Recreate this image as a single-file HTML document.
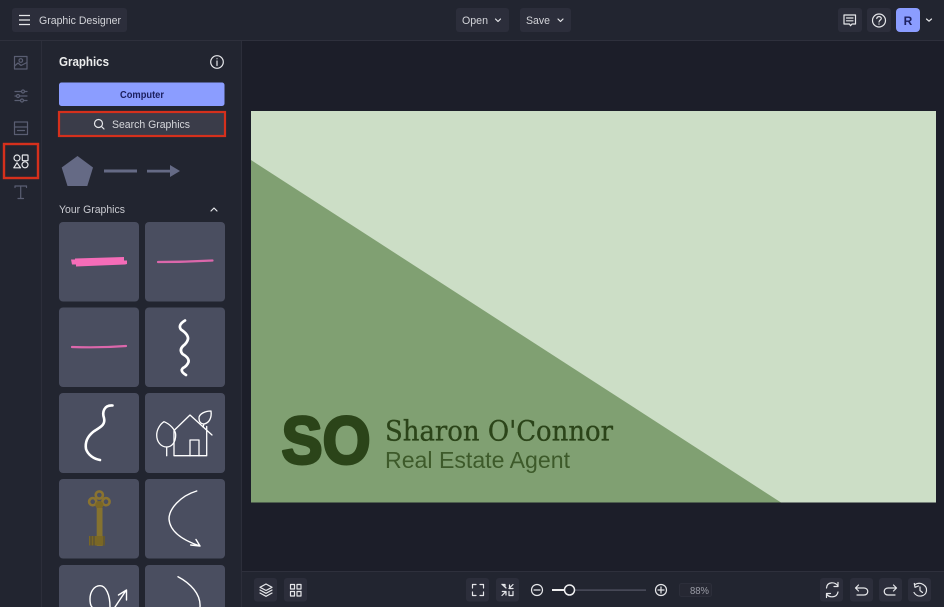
<!DOCTYPE html>
<html><head><meta charset="utf-8"><style>
html,body{margin:0;padding:0;width:944px;height:607px;overflow:hidden;background:#1c1e29}
svg{display:block;font-family:"Liberation Sans",sans-serif}
.i{fill:none;stroke:#e6e7ea;stroke-width:1.2;stroke-linecap:round;stroke-linejoin:round}
.d{fill:none;stroke:#5a5e72;stroke-width:1.2;stroke-linecap:round;stroke-linejoin:round}
.w{fill:none;stroke:#fff;stroke-linecap:round;stroke-linejoin:round}
.b{fill:#2c2e3b}
.p{fill:none;stroke:#f56cb8;stroke-linecap:round}
</style></head><body>
<svg width="944" height="607" viewBox="0 0 944 607" xmlns="http://www.w3.org/2000/svg">
<!-- panels -->
<rect width="944" height="607" fill="#1c1e29"/>
<rect width="944" height="40" fill="#222530"/>
<rect y="40" width="944" height="1" fill="#2e303c"/>
<rect y="41" width="241" height="566" fill="#222530"/>
<rect x="41" y="41" width="1" height="566" fill="#2c2e3a"/>
<rect x="241" y="41" width="1" height="566" fill="#2c2e3a"/>
<rect x="242" y="572" width="702" height="35" fill="#222530"/>
<rect x="242" y="571" width="702" height="1" fill="#2e303c"/>

<!-- top left -->
<rect x="12" y="8" width="115" height="24" rx="3" class="b"/>
<path d="M19 15.500H30M19 20H30M19 24.500H30" stroke="#e6e7ea" stroke-width="1.300" fill="none"/>
<text x="39" y="24" font-size="11" fill="#d3d4d9" textLength="82" lengthAdjust="spacingAndGlyphs">Graphic Designer</text>

<!-- top center -->
<rect x="456" y="8" width="53" height="24" rx="3" class="b"/>
<text x="462" y="24" font-size="11" fill="#d3d4d9" textLength="26" lengthAdjust="spacingAndGlyphs">Open</text>
<path d="M495.500 19L498 21.500L500.500 19" class="i"/>
<rect x="520" y="8" width="51" height="24" rx="3" class="b"/>
<text x="526" y="24" font-size="11" fill="#d3d4d9" textLength="24" lengthAdjust="spacingAndGlyphs">Save</text>
<path d="M558 19L560.500 21.500L563 19" class="i"/>

<!-- top right -->
<rect x="838" y="8" width="24" height="24" rx="3" class="b"/>
<path d="M844 15H855.500V24H852L850.500 25.700L849.500 24H844Z M846.500 18H853M846.500 20.800H853" class="i"/>
<rect x="867" y="8" width="24" height="24" rx="3" class="b"/>
<circle cx="879" cy="20.500" r="6.500" class="i"/>
<path d="M876.800 18.500C877 16 881.300 16 881.300 18.500C881.300 20 879 20 879 22M879 24V24.100" class="i"/>
<rect x="896" y="8" width="24" height="24" rx="4" fill="#8b9dff"/>
<text x="908" y="25" font-size="12" font-weight="700" fill="#1c2060" text-anchor="middle">R</text>
<path d="M926.500 19L929 21.200L931.500 19" class="i"/>

<!-- left rail -->
<g class="d">
<rect x="14.500" y="56.500" width="12.500" height="12.500"/>
<circle cx="20.800" cy="60.500" r="1.800"/>
<path d="M14.500 66L18 63L21 65.500L27 62.500"/>
<path d="M15 91.500H27M15 96H27M15 100.500H27"/>
<circle cx="23" cy="91.500" r="1.500" fill="#222530"/><circle cx="18" cy="96" r="1.500" fill="#222530"/><circle cx="22" cy="100.500" r="1.500" fill="#222530"/>
<rect x="14.500" y="122" width="13" height="12.500"/>
<path d="M14.500 127H27.500M17.500 130.500H24.500"/>
<path d="M15 187.500V186H26.500V187.500M20.700 186V198.500M18 198.500H23.500"/>
</g>
<g class="i">
<circle cx="17" cy="158" r="3"/>
<rect x="22.300" y="155" width="5.700" height="5.700" rx=".6"/>
<path d="M17 162.800L20.500 167.800H13.800Z"/>
<circle cx="25" cy="164.800" r="3"/>
</g>
<rect x="4" y="144" width="34" height="34" fill="none" stroke="#d5301c" stroke-width="2.400"/>

<!-- graphics panel header -->
<text x="59" y="66" font-size="13" font-weight="700" fill="#eceded" textLength="50" lengthAdjust="spacingAndGlyphs">Graphics</text>
<circle cx="217" cy="62" r="6.300" class="i"/>
<path d="M217 61V65.500M217 58.700V58.800" class="i" stroke-width="1.500"/>
<rect x="59" y="82.500" width="165.500" height="23.500" rx="2.500" fill="#8b9dff"/>
<text x="120" y="98" font-size="10.500" font-weight="700" fill="#1c2060" textLength="44" lengthAdjust="spacingAndGlyphs">Computer</text>
<rect x="59" y="112" width="166" height="24" fill="#3a3c49" stroke="#d5301c" stroke-width="2.200"/>
<circle cx="98.500" cy="123.500" r="4" class="i"/>
<path d="M101.500 126.500L104 129" class="i"/>
<text x="112" y="128" font-size="11" fill="#d6d7dc" textLength="78" lengthAdjust="spacingAndGlyphs">Search Graphics</text>

<!-- shapes -->
<path d="M77.500 156L93 167.500L87.300 186H67.500L61.700 167.500Z" fill="#656a85"/>
<rect x="104" y="169.500" width="33" height="3" fill="#656a85"/>
<path d="M147 169.700H170V165L180 171L170 177V172.500H147Z" fill="#656a85"/>

<text x="59" y="213" font-size="11" fill="#c9cad0" textLength="66" lengthAdjust="spacingAndGlyphs">Your Graphics</text>
<path d="M211 211L214 208L217 211" class="i"/>

<!-- tiles -->
<g fill="#4a4e60">
<rect x="59" y="222" width="80" height="79.500" rx="4"/><rect x="145" y="222" width="80" height="79.500" rx="4"/>
<rect x="59" y="307.500" width="80" height="79.500" rx="4"/><rect x="145" y="307.500" width="80" height="79.500" rx="4"/>
<rect x="59" y="393" width="80" height="80" rx="4"/><rect x="145" y="393" width="80" height="80" rx="4"/>
<rect x="59" y="479" width="80" height="79.500" rx="4"/><rect x="145" y="479" width="80" height="79.500" rx="4"/>
<rect x="59" y="565" width="80" height="50" rx="4"/><rect x="145" y="565" width="80" height="50" rx="4"/>
</g>
<!-- pink strokes -->
<path d="M71 259.500H75V258.500L124 257V260.500H127V264L125 264.500L76 266.500V264.500H72Z" fill="#f56cb8"/>
<path d="M158 262Q185 262 212.500 260.500" class="p" stroke-width="2.200" opacity=".85"/>
<path d="M72 347Q100 348 126 346" class="p" stroke-width="2.200" opacity=".85"/>
<!-- squiggle -->
<path d="M185 320.500Q177.500 325 181 329.500Q188.500 334.500 188 339Q187 343 183 346Q179 350 182.500 354Q189.500 358 188.500 362Q187 366 183 368Q179.500 371 186 375" class="w" stroke-width="2.700"/>
<!-- s curve -->
<path d="M112.500 405.500C104 405 102 412 104 418C106 426 98 428 93 432C87 437 85 443 86 449C88 455 94 459 100 460" class="w" stroke-width="2.600"/>
<!-- house and trees -->
<g class="w" stroke-width="1.300">
<path d="M174 430.500V455.700H206.700V426.500M174 430.500L190 415L212 435"/>
<path d="M190 455.700V440H199V455.700"/>
<path d="M164 421.700C160 424 156.700 430 156.700 435C156.700 442 161 447 166.700 447C172 447 175.700 442 175.700 435C175.700 430 170 424 164 421.700Z"/>
<path d="M166.700 447V455.700"/>
<path d="M211 411C205 411 199 414 199 418C199 422 201 424 204 424C209 423 212 418 211 411ZM204 424L203 427"/>
</g>
<!-- key -->
<g>
<circle cx="99.300" cy="495" r="3.600" fill="none" stroke="#8a7330" stroke-width="2.600"/>
<circle cx="92.700" cy="501.700" r="3.600" fill="none" stroke="#8a7330" stroke-width="2.600"/>
<circle cx="106" cy="501.700" r="3.600" fill="none" stroke="#8a7330" stroke-width="2.600"/>
<circle cx="99.300" cy="505" r="4" fill="#7b6726"/>
<rect x="96.700" y="508" width="5.800" height="38" fill="#85722f"/>
<rect x="89" y="536" width="16" height="9.500" fill="#7a6725"/>
<path d="M91 536V545.500M94 536V545.500M104 536V545.500" stroke="#4d4a3a" stroke-width="1"/>
</g>
<!-- curved arrow -->
<path d="M196.700 491C180 496 169 509 169 519C170 533 185 541 200 546M190.700 545L200 546L196 539.500" class="w" stroke-width="1.400"/>
<!-- bottom loop -->
<path d="M110 607C110 595 106 585.700 100 585.700C94 585.700 90 592 90 599C90 603 91 606 92 607M115 607L126 590.500M118.500 595L126.500 590L126.500 600" class="w" stroke-width="1.400"/>
<path d="M178 576.700C190 583 201 594 200 607" class="w" stroke-width="1.400"/>

<!-- canvas -->
<rect x="251" y="111" width="685" height="391.500" fill="#ccdec6"/>
<path d="M251 160L781 502.500H251Z" fill="#80a072"/>
<text x="281.500" y="463.500" font-size="67" font-weight="700" fill="#2b4419" stroke="#2b4419" stroke-width="3" stroke-linejoin="round" textLength="89" lengthAdjust="spacingAndGlyphs">SO</text>
<text x="385" y="440.500" font-family="DejaVu Serif" font-size="28" fill="#2b4419" stroke="#2b4419" stroke-width=".3" textLength="228" lengthAdjust="spacingAndGlyphs">Sharon O'Connor</text>
<text x="385" y="468" font-size="23.500" fill="#3d5a2a" textLength="185" lengthAdjust="spacingAndGlyphs">Real Estate Agent</text>

<!-- bottom left -->
<rect x="254" y="578" width="23" height="23.500" rx="3" class="b"/>
<path d="M266 584L272 587.300L266 590.500L260 587.300ZM260 590L266 593.300L272 590M260 593L266 596.300L272 593" class="i"/>
<rect x="284" y="578" width="23" height="23.500" rx="3" class="b"/>
<path d="M290.500 584.500h4v4.500h-4zM297 584.500h4v4.500h-4zM290.500 591.500h4v4.500h-4zM297 591.500h4v4.500h-4z" class="i"/>

<rect x="466" y="578" width="23" height="23.500" rx="3" class="b"/>
<path d="M472.500 588V584.500H476M480 584.500H483.500V588M472.500 592V595.500H476M480 595.500H483.500V592" class="i"/>
<rect x="496" y="578" width="23" height="23.500" rx="3" class="b"/>
<path d="M502 584.500H505V587M506 588L502 584.300M513 584.500L509 588.500M509.500 585V588.500H513M502 595.500L506 591.500M502.300 591.500H506V595M509 591.500L509 595.500H513V591.500" class="i"/>

<circle cx="537" cy="590" r="5.500" class="i"/>
<path d="M534 590H540" class="i"/>
<rect x="552" y="589.500" width="94" height="1.200" fill="#555868"/>
<rect x="552" y="589" width="13" height="2" fill="#eee"/>
<circle cx="569.500" cy="590" r="5" fill="#222530" stroke="#f0f0f2" stroke-width="1.500"/>
<circle cx="661" cy="590" r="5.500" class="i"/>
<path d="M658 590H664M661 587V593" class="i"/>
<rect x="679.500" y="583.500" width="32" height="13" rx="2" fill="#262833" stroke="#2c2e3a"/>
<text x="690" y="594" font-size="10" fill="#9c9ea8" textLength="19" lengthAdjust="spacingAndGlyphs">88%</text>

<!-- bottom right -->
<rect x="820" y="578" width="23" height="23.500" rx="3" class="b"/>
<path d="M826.500 588C827 581.500 835 581.500 838 586M838 592C837 598 829 598 826.500 594M838 582.500V586.500H834M826.500 597.500V593.500H830.500" class="i"/>
<rect x="850" y="578" width="23" height="23.500" rx="3" class="b"/>
<path d="M855.500 588H864C869 588 869 595 864 595H857M858.500 585L855.500 588L858.500 591" class="i"/>
<rect x="879" y="578" width="23" height="23.500" rx="3" class="b"/>
<path d="M896.500 588H888C883 588 883 595 888 595H895M893.500 585L896.500 588L893.500 591" class="i"/>
<rect x="908" y="578" width="23" height="23.500" rx="3" class="b"/>
<path d="M915 584.500C921 581 927 586 926.500 590.500C926 597 917 598 914 592.500M914.300 583.500L915 587.300L918.500 586M920 587V590.500L922.500 592.500" class="i"/>
</svg>
</body></html>
